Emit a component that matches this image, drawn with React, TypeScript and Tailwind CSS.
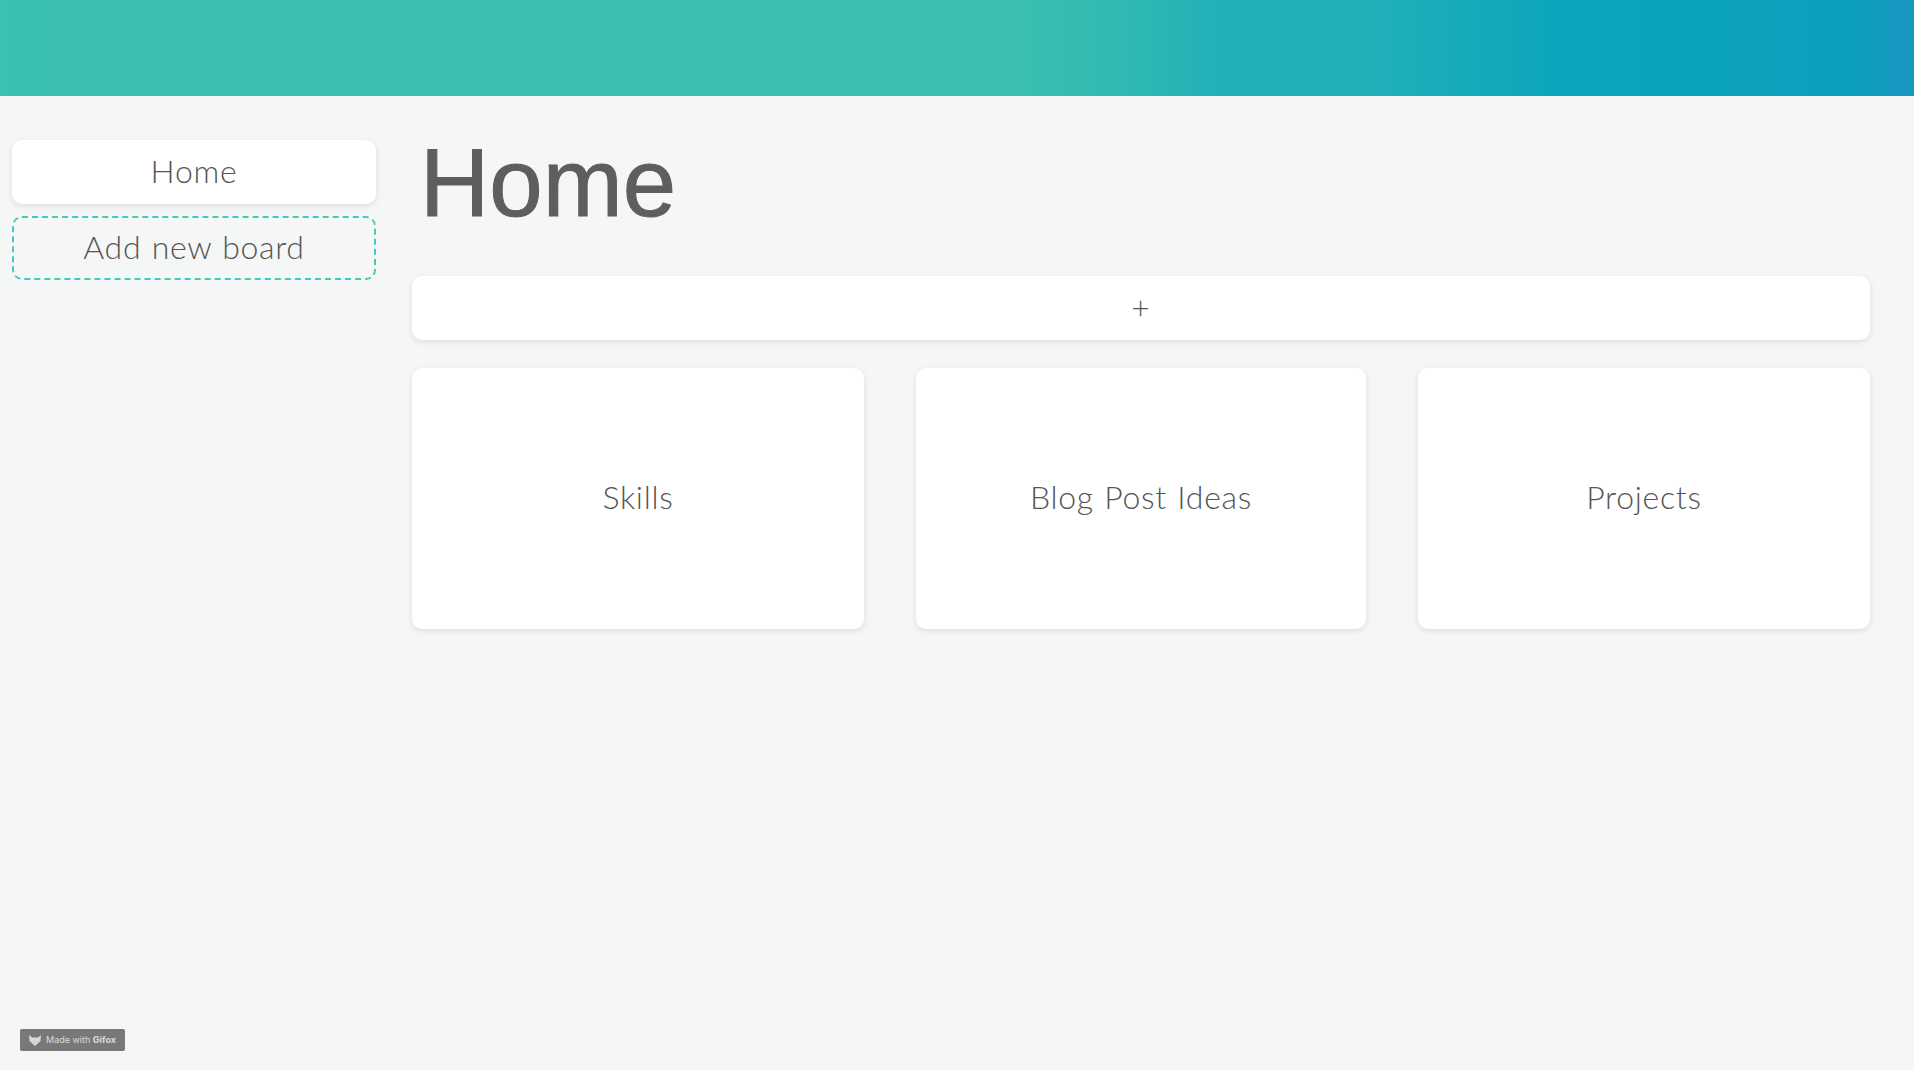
const boards = ['Skills', 'Blog Post Ideas', 'Projects'];

const card = 'bg-white rounded-[10px] shadow-[0_2px_6px_rgba(0,0,0,0.1)] flex items-center justify-center pb-[3px] text-[32px] tracking-[0.7px] [word-spacing:1px]';

export default function App() {
  return (
    <div className="h-[1070px] overflow-hidden bg-[#f5f6f6] font-['Lato',sans-serif] font-light text-[#555555] relative">
      {/* header strip, flat until the gradient kicks in past the middle */}
      <div className="h-24 bg-[linear-gradient(90deg,#3cc0b0_0%,#3cbfb0_53%,#2fb9b3_59%,#20b0b8_64%,#1fb0b8_72%,#0ca5bd_81.7%,#0ca3bd_90%,#0c9ebf_97%,#1a96c0_100%)]" />
      <div className="flex">
        <div className="w-[376px] shrink-0 pl-3 pt-[44px] flex flex-col gap-3">
          <div className={`w-[364px] h-[64px] ${card}`}>Home</div>
          <div className="w-[364px] h-[64px] rounded-[10px] border-2 border-dashed border-[#45c9bb] flex items-center justify-center pb-[3px] text-[32px] tracking-[0.7px] [word-spacing:1px]">Add new board</div>
        </div>
        <div className="w-[1458px] ml-[36px] shrink-0">
          <h1 className="font-['Liberation_Sans',sans-serif] font-normal text-[96px] leading-[110px] pl-[8px] pt-[32px] h-[180px] text-[#5e5e5e] [-webkit-text-stroke:1px_#5e5e5e]">Home</h1>
          <div className={`h-[64px] ${card}`}>+</div>
          <div className="mt-7 grid grid-cols-[452px_450px_452px] gap-[52px]">
            {boards.map((b) => (
              <div key={b} className={`h-[261px] ${card}`}>{b}</div>
            ))}
          </div>
        </div>
      </div>
      <div className="absolute left-5 top-[1029px] w-[105px] h-[22px] rounded-[2px] bg-[#787878] flex items-center gap-1 pl-2 text-[9px] text-[#dcdcdc] font-['Inter',sans-serif] font-normal">
        <svg width="14" height="13" viewBox="0 0 14 13" fill="#d8d8d8"><path d="M1 1l3 2.5h6L13 1l-.5 6L7 12 1.500 7z" /></svg>
        <span>Made with <b>Gifox</b></span>
      </div>
    </div>
  );
}
